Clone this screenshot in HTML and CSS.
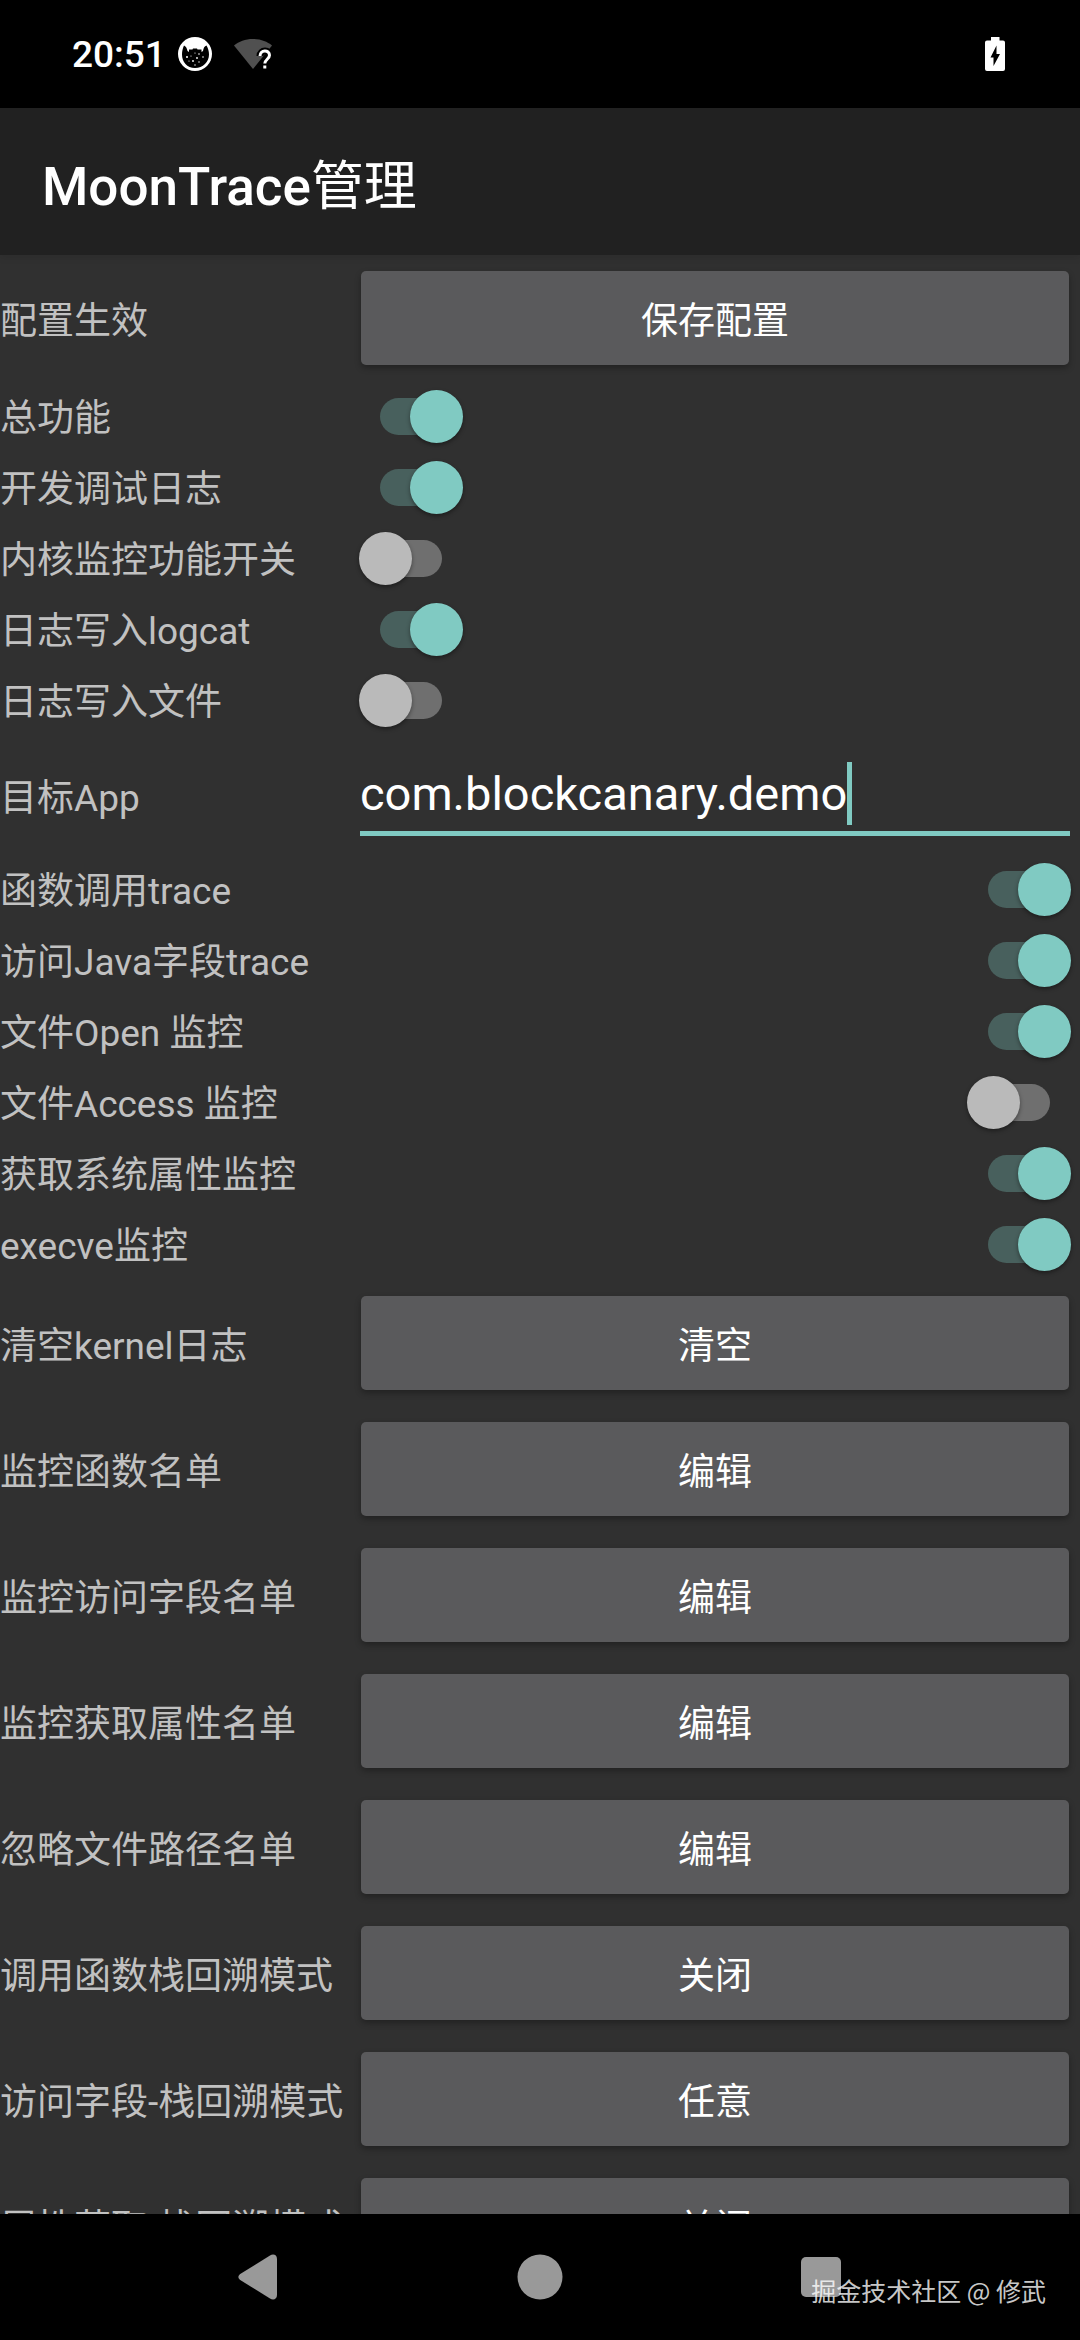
FILE: index.html
```
<!DOCTYPE html>
<html lang="zh-CN">
<head>
    <meta charset="UTF-8">
    <meta name="viewport" content="width=device-width, initial-scale=1.0">
    <title>MoonTrace管理</title>
    <link rel="stylesheet" href="styles.css">
</head>
<body>
    <div class="screen">
        <div class="status-bar">
            <span class="time">20:51</span>
            <svg class="icon-cat" viewBox="0 0 34 34" width="34" height="34">
                <circle cx="17" cy="17" r="17" fill="#fff"/>
                <path d="M6 8.500C7.500 9 9 11 9.500 14L11 15V12.500H14.500L15 11.500H19L19.500 12.500H23.500V15L25 14C25.500 11 26.500 9 28.500 8.500C30 11 31 14 31 17.500C31 25 25 31 17 31S4 25 4 17.500C4 14 4.800 11 6 8.500Z" fill="#000"/>
                <g fill="#fff">
                    <circle cx="9" cy="20" r="1"/>
                    <circle cx="17" cy="16" r="0.600"/>
                    <circle cx="21" cy="17" r="0.800"/>
                    <circle cx="13" cy="19" r="0.600"/>
                    <circle cx="19" cy="21" r="0.900"/>
                    <circle cx="25" cy="20" r="0.800"/>
                    <circle cx="15" cy="24" r="0.900"/>
                    <circle cx="21" cy="25" r="0.700"/>
                    <circle cx="11" cy="24" r="0.600"/>
                    <circle cx="17" cy="28" r="0.700"/>
                </g>
            </svg>
            <svg class="icon-wifi" viewBox="0 0 38 31" width="38" height="31">
                <path d="M0 6.500C5 2.500 11 0 19 0S33 2.500 38 6.500L19 30Z" fill="#505050"/>
                <path d="M26 17C26 10.500 36 10.500 36 16.500C36 20.500 31 20.500 31 25M31 27V30" fill="none" stroke="#000" stroke-width="7"/>
                <path d="M26 17C26 10.500 35.500 10.500 35.500 16.200C35.500 20 30.800 20.500 30.800 24.500M30.800 26.500V29.500" fill="none" stroke="#fff" stroke-width="3"/>
            </svg>
            <svg class="icon-battery" viewBox="0 0 20 34" width="20" height="34">
                <path d="M6 0H14.500V3.500H18Q20 3.500 20 5.500V32Q20 34 18 34H2Q0 34 0 32V5.500Q0 3.500 2 3.500H6Z" fill="#fff"/>
                <path d="M11.500 8.500V17H15L8.500 29V20.500H5.500Z" fill="#000"/>
            </svg>
        </div>

        <header class="app-bar">
            <h1>MoonTrace<span>管理</span></h1>
        </header>

        <main class="settings">
            <div class="row row-button">
                <label for="save">配置生效</label>
                <button type="button" id="save">保存配置</button>
            </div>

            <div class="row row-switch">
                <label for="enabled">总功能</label>
                <input type="checkbox" id="enabled" checked>
            </div>
            <div class="row row-switch">
                <label for="debugLog">开发调试日志</label>
                <input type="checkbox" id="debugLog" checked>
            </div>
            <div class="row row-switch">
                <label for="kernel">内核监控功能开关</label>
                <input type="checkbox" id="kernel">
            </div>
            <div class="row row-switch">
                <label for="logcat">日志写入logcat</label>
                <input type="checkbox" id="logcat" checked>
            </div>
            <div class="row row-switch">
                <label for="logFile">日志写入文件</label>
                <input type="checkbox" id="logFile">
            </div>

            <div class="row row-text">
                <label for="app">目标App</label>
                <div class="text-field">
                    <input type="text" id="app" value="com.blockcanary.demo" spellcheck="false">
                    <span class="caret"></span>
                </div>
            </div>

            <div class="row row-switch end">
                <label for="callTrace">函数调用trace</label>
                <input type="checkbox" id="callTrace" checked>
            </div>
            <div class="row row-switch end">
                <label for="fieldTrace">访问Java字段trace</label>
                <input type="checkbox" id="fieldTrace" checked>
            </div>
            <div class="row row-switch end">
                <label for="fileOpen">文件Open 监控</label>
                <input type="checkbox" id="fileOpen" checked>
            </div>
            <div class="row row-switch end">
                <label for="fileAccess">文件Access 监控</label>
                <input type="checkbox" id="fileAccess">
            </div>
            <div class="row row-switch end">
                <label for="sysProp">获取系统属性监控</label>
                <input type="checkbox" id="sysProp" checked>
            </div>
            <div class="row row-switch end">
                <label for="execve">execve监控</label>
                <input type="checkbox" id="execve" checked>
            </div>

            <div class="row row-button">
                <label for="clearLog">清空kernel日志</label>
                <button type="button" id="clearLog">清空</button>
            </div>
            <div class="row row-button">
                <label for="methodList">监控函数名单</label>
                <button type="button" id="methodList">编辑</button>
            </div>
            <div class="row row-button">
                <label for="fieldList">监控访问字段名单</label>
                <button type="button" id="fieldList">编辑</button>
            </div>
            <div class="row row-button">
                <label for="propList">监控获取属性名单</label>
                <button type="button" id="propList">编辑</button>
            </div>
            <div class="row row-button">
                <label for="ignoreList">忽略文件路径名单</label>
                <button type="button" id="ignoreList">编辑</button>
            </div>
            <div class="row row-button">
                <label for="callStack">调用函数栈回溯模式</label>
                <button type="button" id="callStack">关闭</button>
            </div>
            <div class="row row-button">
                <label for="fieldStack">访问字段-栈回溯模式</label>
                <button type="button" id="fieldStack">任意</button>
            </div>
            <div class="row row-button">
                <label for="propStack">属性获取-栈回溯模式</label>
                <button type="button" id="propStack">关闭</button>
            </div>
        </main>

        <nav class="nav-bar">
            <button type="button" aria-label="返回">
                <svg viewBox="0 0 46 46" width="46" height="46">
                    <path d="M5 19.500L34 1.500C37 -0.300 41 0.500 41 5V41C41 45.500 37 46.300 34 44.500L5 26.500C1.500 24.300 1.500 21.700 5 19.500Z" fill="#999"/>
                </svg>
            </button>
            <button type="button" aria-label="主屏幕">
                <svg viewBox="0 0 46 46" width="46" height="46">
                    <circle cx="23" cy="23" r="22.500" fill="#999"/>
                </svg>
            </button>
            <button type="button" aria-label="最近任务">
                <svg viewBox="0 0 46 46" width="46" height="46">
                    <rect x="3" y="3" width="40" height="40" rx="5" fill="#999"/>
                </svg>
            </button>
            <span class="watermark">掘金技术社区 @ 修武</span>
        </nav>
    </div>
</body>
</html>
```
FILE: styles.css
```
* {
    box-sizing: border-box;
}

body {
    margin: 0;
    font-family: Roboto, "Noto Sans CJK SC", sans-serif;
    font-size: 37px;
    color: #c1c1c1;
    background-color: #303030;
}

.screen {
    display: flex;
    flex-direction: column;
    height: 100vh;
}

svg {
    display: block;
}

/* status bar */
.status-bar {
    display: flex;
    align-items: center;
    flex: none;
    height: 108px;
    padding: 0 75px 0 72px;
    background-color: #000;
}

.time {
    color: #fff;
    font-weight: 500;
}

.icon-cat {
    margin-left: 12px;
}

.icon-wifi {
    margin-left: 22px;
}

.icon-battery {
    margin-left: auto;
}

/* title */
.app-bar {
    position: relative;
    display: flex;
    align-items: center;
    flex: none;
    height: 147px;
    padding: 0 42px;
    background-color: #212121;
    box-shadow: 0 2px 8px rgba(0, 0, 0, 0.1);
}

h1 {
    margin: 0;
    color: #fff;
    font-size: 53px;
    font-weight: 500;
}

h1 span {
    font-weight: 400;
}

/* settings list */
.settings {
    flex: 1;
    min-height: 0;
    overflow-y: auto;
    scrollbar-width: none;
}

.row {
    display: grid;
    grid-template-columns: 350px 1fr;
    align-items: center;
}

.row label {
    white-space: nowrap;
}

.row-button {
    height: 126px;
}

.row-button button {
    height: 94px;
    margin: 0 11px;
    padding: 0;
    border: none;
    border-radius: 5px;
    background-color: #5a5a5c;
    box-shadow: 0 3px 6px rgba(0, 0, 0, 0.3);
    color: #fff;
    font: inherit;
}

.row-switch {
    height: 71px;
}

.row-switch label {
    padding-bottom: 4px;
}

.row-switch input {
    appearance: none;
    display: grid;
    align-items: center;
    width: 104px;
    height: 53px;
    margin: 0 9px;
}

.row-switch input::before,
.row-switch input::after {
    content: "";
    grid-area: 1 / 1;
}

.row-switch input::before {
    width: 62px;
    height: 37px;
    border-radius: 19px;
    background-color: #6f6f6f;
    justify-self: center;
}

.row-switch input::after {
    width: 53px;
    height: 53px;
    border-radius: 50%;
    background-color: #bababa;
    box-shadow: 0 2px 4px rgba(0, 0, 0, 0.4);
    justify-self: start;
}

.row-switch input:checked::before {
    background-color: #48605d;
}

.row-switch input:checked::after {
    background-color: #80cac2;
    justify-self: end;
}

.row-switch.end input {
    justify-self: end;
}

.row-text {
    height: 118px;
}

.text-field {
    display: flex;
    align-items: center;
    height: 82px;
    margin: 0 10px;
    padding-top: 2px;
    border-bottom: 5px solid #80cac2;
}

.text-field input {
    field-sizing: content;
    max-width: 100%;
    padding: 0;
    border: none;
    outline: none;
    background: none;
    color: #fff;
    font: inherit;
    font-size: 47px;
}

.caret {
    width: 5px;
    height: 63px;
    background-color: #80cac2;
}

/* navigation */
.nav-bar {
    position: relative;
    display: grid;
    grid-template-columns: repeat(3, 1fr);
    flex: none;
    height: 126px;
    padding: 0 11%;
    background-color: #000;
}

.nav-bar button {
    display: flex;
    align-items: center;
    justify-content: center;
    padding: 0;
    border: none;
    background: none;
}

.watermark {
    position: absolute;
    right: 34px;
    bottom: 32px;
    color: rgba(255, 255, 255, 0.8);
    font-family: "Noto Sans CJK SC", sans-serif;
    font-size: 25px;
}
```
